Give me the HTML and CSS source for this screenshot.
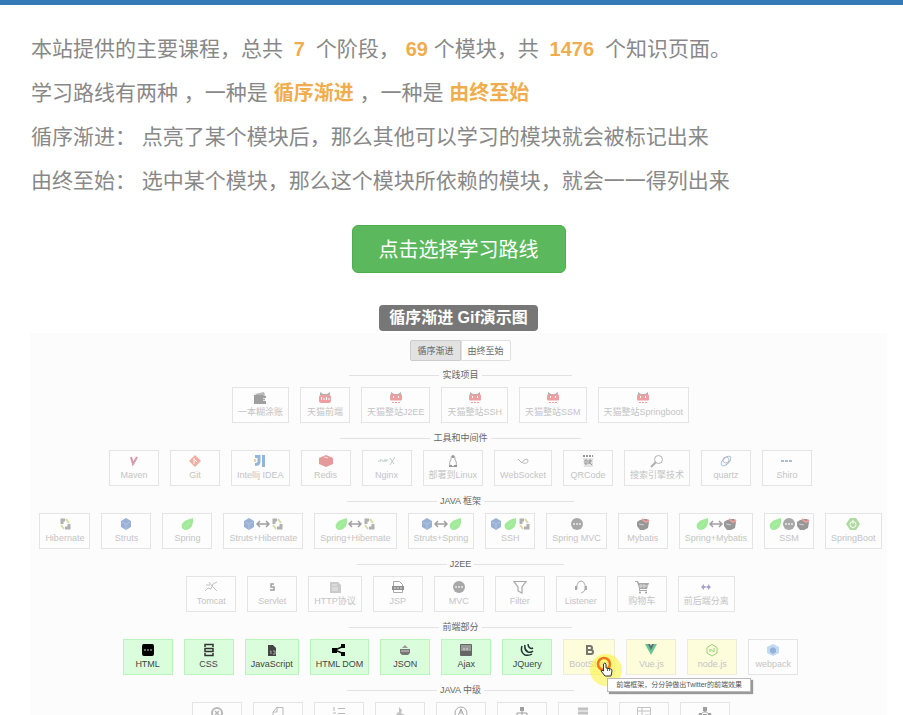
FILE: index.html
```html
<!DOCTYPE html>
<html lang="zh-CN">
<head>
<meta charset="utf-8">
<title>学习路线</title>
<link rel="stylesheet" href="styles.css">
</head>
<body>
<svg class="sprite" aria-hidden="true">
  <symbol id="wallet" viewBox="0 0 14 14"><path fill="#444" d="M1 4h9l3 1v2h-3v3h3v3H1z"/><path fill="#777" d="M2 3l9-2 1 3H3z"/><circle cx="11" cy="8.500" r="1" fill="#444"/></symbol>
  <symbol id="cat" viewBox="0 0 14 14"><path fill="#666" d="M2 4V1l3 2h4l3-2v3z"/><rect x="1" y="4" width="12" height="8" rx="2" fill="#e0444a"/><path stroke="#fff" d="M3.500 6v3M6 7v2M8.500 6v3M11 7v2"/></symbol>
  <symbol id="cat2" viewBox="0 0 14 14"><path fill="#666" d="M2 4V1l3 2h4l3-2v3z"/><rect x="1" y="3.500" width="12" height="6" rx="1" fill="#e0444a"/><path stroke="#fff" d="M4.500 5v2M9.500 5v2"/><path stroke="#e0444a" stroke-dasharray="2 1" d="M3 11.500h8"/></symbol>
  <symbol id="maven" viewBox="0 0 14 14"><path fill="none" stroke="#c0304c" stroke-width="2" d="M4 3l2 7 4-7"/><path stroke="#8a5a9a" d="M6 11l3-5"/></symbol>
  <symbol id="git" viewBox="0 0 14 14"><path fill="#e8604a" d="M7 1l6 6-6 6-6-6z"/><path stroke="#fff" fill="none" d="M6 4v6M6 5l3 3"/></symbol>
  <symbol id="idea" viewBox="0 0 14 14"><path fill="none" stroke="#2a72b8" stroke-width="3" d="M2 2.500h4v5q0 3-4 3M10.500 1v12"/><path stroke="#f0a040" stroke-width="2" d="M2 5v3"/></symbol>
  <symbol id="redis" viewBox="0 0 14 14"><path fill="#cc3a3a" d="M7 1l7 3v6l-7 3-7-3V4z"/><path fill="none" stroke="#f6c6c6" d="M5 3l4 1"/></symbol>
  <symbol id="nginx" viewBox="0 0 20 14"><path fill="none" stroke="#7a9a92" d="M1 7h3V5M5 7h3V5M9 8V6h2M13 11l5-8M13 4l4 6"/></symbol>
  <symbol id="linux" viewBox="0 0 14 14"><path fill="#fff" stroke="#444" d="M7 1.500c3 0 1 4 3 6 1 3 0 5-3 5s-4-2-3-5c2-2 0-6 3-6z"/><path stroke="#333" stroke-width="2" d="M3 12h3M8 12h3M6 3h2"/></symbol>
  <symbol id="socket" viewBox="0 0 14 14"><path fill="none" stroke="#777" d="M2 5l4 4 2-3M8 6q4-2 4 1t-5 2"/></symbol>
  <symbol id="qr" viewBox="0 0 14 14"><path stroke="#333" stroke-width="2" stroke-dasharray="2 1" d="M2 2h10"/><path fill="#ccc" d="M2 4h10v9H3z"/><path fill="none" stroke="#333" d="M4 6h2v4H4zM8 10V6h2v2H8l3 3"/></symbol>
  <symbol id="search" viewBox="0 0 14 14"><circle cx="8.500" cy="5.500" r="4" fill="none" stroke="#666"/><path stroke="#666" stroke-width="2" d="M6 8l-5 5"/></symbol>
  <symbol id="quartz" viewBox="0 0 14 14"><ellipse cx="7" cy="7" rx="6" ry="3" fill="none" stroke="#3a76a8" transform="rotate(-45 7 7)"/><circle cx="7" cy="6" r="3" fill="none" stroke="#888"/></symbol>
  <symbol id="shiro" viewBox="0 0 14 14"><path stroke="#5a80a0" stroke-width="2" stroke-dasharray="3 1" d="M1 7h12"/></symbol>
  <symbol id="hib" viewBox="0 0 14 14"><path fill="none" stroke="#666" stroke-width="3" d="M7 3H4v4M7 11h4V7"/><path stroke="#b8b848" stroke-width="2" d="M8 2l3 4M3 8l3 4"/></symbol>
  <symbol id="struts" viewBox="0 0 14 14"><path fill="#3a68b0" d="M7 1l5 3v6l-5 3-5-3V4z"/><path fill="none" stroke="#6a8cc4" d="M3 5l4 2 4-2M7 7v5"/></symbol>
  <symbol id="leaf" viewBox="0 0 14 14"><path fill="#48d838" d="M13 1q1 8-4 11-4 2-6 0-2-2-1-5 2-4 11-6z"/><path stroke="#70e060" d="M4 11l6-6"/></symbol>
  <symbol id="link" viewBox="0 0 14 14"><path fill="none" stroke="#444" stroke-width="1.500" d="M1 7h12M4 4L1 7l3 3M10 4l3 3-3 3"/></symbol>
  <symbol id="disc" viewBox="0 0 14 14"><circle cx="7" cy="7" r="6" fill="#555"/><path stroke="#bbb" stroke-width="2" stroke-dasharray="2 1" d="M3 7h8"/></symbol>
  <symbol id="bird" viewBox="0 0 14 14"><path fill="#333" d="M1 5l3-2 7-1 2 3-1 6-4 2H4L1 9z"/><path stroke="#e04040" stroke-width="2" d="M6 2l4 3 3-2"/><path stroke="#aaa" d="M3 7l5 1"/></symbol>
  <symbol id="boot" viewBox="0 0 14 14"><path fill="#64b848" d="M4 1h6l4 6-4 6H4L0 7z"/><circle cx="7" cy="7.500" r="3" fill="none" stroke="#fff"/><path stroke="#fff" d="M7 3v4"/></symbol>
  <symbol id="tomcat" viewBox="0 0 14 14"><path fill="none" stroke="#888" d="M1 11l3-3 3 1 2-5 4-2M5 2l3 4 5 5M2 5h4"/></symbol>
  <symbol id="servlet" viewBox="0 0 14 14"><path fill="none" stroke="#444" stroke-width="1.500" d="M9 4H6v3h3v3H5"/></symbol>
  <symbol id="http" viewBox="0 0 14 14"><path fill="#999" d="M2 2h8l3 3v8H2z"/><path stroke="#ddd" d="M4 5h5M4 8h6M4 10h6"/></symbol>
  <symbol id="jsp" viewBox="0 0 14 14"><path fill="#fff" stroke="#555" d="M2.500 1.500h6l3 3v8h-9z"/><path fill="#222" d="M1 6h12v4H1z"/><path stroke="#ccc" stroke-dasharray="2 1" d="M3 8h8"/></symbol>
  <symbol id="funnel" viewBox="0 0 14 14"><path fill="none" stroke="#555" stroke-width="1.200" d="M1 1.500h12L9 7v6l-4-2V7z"/></symbol>
  <symbol id="headset" viewBox="0 0 14 14"><path fill="none" stroke="#666" d="M3 9V5q1-4 4-4t4 4v4q0 3-4 4"/><path stroke="#555" stroke-width="2" d="M2 6v4M12 6v4"/></symbol>
  <symbol id="cart" viewBox="0 0 14 14"><path fill="#555" d="M0 1h3l1 2h10l-2 6H5v1h7v1H4V8L2 2H0z"/><circle cx="5" cy="12.500" r="1" fill="#444"/><circle cx="11" cy="12.500" r="1" fill="#444"/><path stroke="#bbb" d="M6 4v4M9 4v4M4 6h9"/></symbol>
  <symbol id="split" viewBox="0 0 14 14"><path fill="#5050a0" d="M2 7l3-3v2h4V4l3 3-3 3V8H5v2z"/><path stroke="#fff" d="M7 4v6"/></symbol>
  <symbol id="html" viewBox="0 0 14 14"><rect x="1" y="1" width="12" height="12" rx="2"/><path stroke="#ccc" stroke-dasharray="2 1" d="M3 7h8"/></symbol>
  <symbol id="css" viewBox="0 0 14 14"><path fill="none" stroke="#333" stroke-width="1.500" d="M3 4V1.500h8V4M3 10v2.500h8V10M3 5.500h8v3H3z"/></symbol>
  <symbol id="js" viewBox="0 0 14 14"><path fill="#444" d="M3 2h5l3 3v8H3z"/><path stroke="#aaa" fill="none" d="M5 8h1v3M8 8h2v3H8"/></symbol>
  <symbol id="dom" viewBox="0 0 14 14"><path fill="none" stroke="#111" stroke-width="1.500" d="M12 3L3 7l9 4"/><path d="M0 5h5v5H0zM9 1h4v4H9zM9 9h4v4H9z"/></symbol>
  <symbol id="json" viewBox="0 0 14 14"><path fill="#777" d="M2 6h10v4l-2 2H4l-2-2z"/><path fill="#999" d="M4 5l3-3 3 3z"/><path stroke="#ccc" d="M3 8h8"/></symbol>
  <symbol id="ajax" viewBox="0 0 14 14"><rect x="1" y="1" width="12" height="12" rx="1" fill="#666"/><path fill="#999" d="M2 2h10v6H2z"/><path stroke="#ddd" stroke-dasharray="2 1" d="M4 6h6"/></symbol>
  <symbol id="jquery" viewBox="0 0 14 14"><path fill="none" stroke="#233" stroke-width="1.500" d="M2 3q-2 6 3 9 4 1 7-1M5 2q-1 5 3 7 3 1 5-1M8 1q0 3 2 4 1 1 3 0"/></symbol>
  <symbol id="bold" viewBox="0 0 14 14"><path fill="none" stroke="#555" stroke-width="2" d="M5 3h3q2 0 2 2t-2 2H5h4q2 0 2 2t-2 2H5zM5 2v10"/></symbol>
  <symbol id="vue" viewBox="0 0 14 14"><path fill="#42b883" d="M1 1h12L7 12z"/><path fill="#35495e" d="M4 1h6L7 7z"/><path fill="#d5efc8" d="M6 1h2L7 3z"/></symbol>
  <symbol id="node" viewBox="0 0 14 14"><path fill="none" stroke="#80c860" d="M7 1.500l5 3v5.500l-5 3-5-3V4.500zM5 9V6l4 3V5"/></symbol>
  <symbol id="webpack" viewBox="0 0 14 14"><path fill="#88b8e8" d="M7 1l6 3v6l-6 3-6-3V4z"/><path fill="#3068b8" d="M7 4l3 2v3l-3 2-3-2V6z"/></symbol>
  <symbol id="cross" viewBox="0 0 14 14"><circle cx="7" cy="7" r="5" fill="none" stroke="#777" stroke-width="2"/><path stroke="#777" stroke-width="1.500" d="M5 5l4 4M9 5l-4 4"/></symbol>
  <symbol id="page" viewBox="0 0 14 14"><path fill="none" stroke="#777" d="M6 1.500h6v11H2V6zM6 1v5H2"/></symbol>
  <symbol id="list" viewBox="0 0 14 14"><path stroke="#777" d="M6 2.500h7M6 7.500h7M6 12.500h7M2 1v4M1 7h3M1 12h3"/></symbol>
  <symbol id="pin" viewBox="0 0 14 14"><path fill="#888" d="M6 1l3 3-1 3 4 2-2 3-3-2-5 3 2-6 2-1z"/></symbol>
  <symbol id="compass" viewBox="0 0 14 14"><circle cx="7" cy="7" r="6" fill="none" stroke="#555"/><path fill="none" stroke="#555" d="M4 10l3-7 3 7M7 3v5"/></symbol>
  <symbol id="tree" viewBox="0 0 14 14"><path fill="none" stroke="#444" d="M7 3v8M2 10V7h10v3"/><path fill="#444" d="M5 1h4v4H5zM0 9h4v4H0zM5 9h4v4H5zM10 9h4v4h-4z"/></symbol>
  <symbol id="db" viewBox="0 0 14 14"><path stroke="#888" stroke-width="3" d="M2 3h10M2 7h10M2 11h10"/></symbol>
  <symbol id="layout" viewBox="0 0 14 14"><path fill="none" stroke="#888" d="M.5 1.500h13v11H.5zM5 1v12M1 5h12M8 9h5"/></symbol>
  <symbol id="team" viewBox="0 0 14 14"><path fill="none" stroke="#555" d="M7 3v4M3 8l4-3 4 3"/><path fill="#444" d="M5 1h4v4H5zM1 7h3v5H0zM10 7h3l1 5h-4zM5 8h4v5H5z"/></symbol>
</svg>

<main class="page">
  <section class="intro">
    <p>本站提供的主要课程，总共 <b class="num">7</b> 个阶段， <b>69</b> 个模块，共 <b class="num">1476</b> 个知识页面。</p>
    <p>学习路线有两种 ，一种是 <b>循序渐进</b> ，一种是 <b>由终至始</b></p>
    <p>循序渐进： 点亮了某个模块后，那么其他可以学习的模块就会被标记出来</p>
    <p>由终至始： 选中某个模块，那么这个模块所依赖的模块，就会一一得列出来</p>
  </section>

  <button class="choose" type="button">点击选择学习路线</button>
  <span class="caption">循序渐进 Gif演示图</span>

  <section class="demo">
    <div class="modes"><button type="button" class="on">循序渐进</button><button type="button">由终至始</button></div>

    <h2>实践项目</h2>
    <div class="row">
      <button class="tile"><svg><use href="#wallet"/></svg><span>一本糊涂账</span></button>
      <button class="tile"><svg><use href="#cat"/></svg><span>天猫前端</span></button>
      <button class="tile"><svg><use href="#cat2"/></svg><span>天猫整站J2EE</span></button>
      <button class="tile"><svg><use href="#cat2"/></svg><span>天猫整站SSH</span></button>
      <button class="tile"><svg><use href="#cat2"/></svg><span>天猫整站SSM</span></button>
      <button class="tile"><svg><use href="#cat2"/></svg><span>天猫整站Springboot</span></button>
    </div>

    <h2>工具和中间件</h2>
    <div class="row">
      <button class="tile"><svg><use href="#maven"/></svg><span>Maven</span></button>
      <button class="tile"><svg><use href="#git"/></svg><span>Git</span></button>
      <button class="tile"><svg><use href="#idea"/></svg><span>Intellij IDEA</span></button>
      <button class="tile"><svg><use href="#redis"/></svg><span>Redis</span></button>
      <button class="tile"><svg class="wide"><use href="#nginx"/></svg><span>Nginx</span></button>
      <button class="tile"><svg><use href="#linux"/></svg><span>部署到Linux</span></button>
      <button class="tile"><svg><use href="#socket"/></svg><span>WebSocket</span></button>
      <button class="tile"><svg><use href="#qr"/></svg><span>QRCode</span></button>
      <button class="tile"><svg><use href="#search"/></svg><span>搜索引擎技术</span></button>
      <button class="tile"><svg><use href="#quartz"/></svg><span>quartz</span></button>
      <button class="tile"><svg><use href="#shiro"/></svg><span>Shiro</span></button>
    </div>

    <h2>JAVA 框架</h2>
    <div class="row">
      <button class="tile"><svg><use href="#hib"/></svg><span>Hibernate</span></button>
      <button class="tile"><svg><use href="#struts"/></svg><span>Struts</span></button>
      <button class="tile"><svg><use href="#leaf"/></svg><span>Spring</span></button>
      <button class="tile"><i><svg><use href="#struts"/></svg><svg><use href="#link"/></svg><svg><use href="#hib"/></svg></i><span>Struts+Hibernate</span></button>
      <button class="tile"><i><svg><use href="#leaf"/></svg><svg><use href="#link"/></svg><svg><use href="#hib"/></svg></i><span>Spring+Hibernate</span></button>
      <button class="tile"><i><svg><use href="#struts"/></svg><svg><use href="#link"/></svg><svg><use href="#leaf"/></svg></i><span>Struts+Spring</span></button>
      <button class="tile"><i><svg><use href="#struts"/></svg><svg><use href="#leaf"/></svg><svg><use href="#hib"/></svg></i><span>SSH</span></button>
      <button class="tile"><svg><use href="#disc"/></svg><span>Spring MVC</span></button>
      <button class="tile"><svg><use href="#bird"/></svg><span>Mybatis</span></button>
      <button class="tile"><i><svg><use href="#leaf"/></svg><svg><use href="#link"/></svg><svg><use href="#bird"/></svg></i><span>Spring+Mybatis</span></button>
      <button class="tile"><i><svg><use href="#leaf"/></svg><svg><use href="#disc"/></svg><svg><use href="#bird"/></svg></i><span>SSM</span></button>
      <button class="tile"><svg><use href="#boot"/></svg><span>SpringBoot</span></button>
    </div>

    <h2>J2EE</h2>
    <div class="row">
      <button class="tile"><svg><use href="#tomcat"/></svg><span>Tomcat</span></button>
      <button class="tile"><svg><use href="#servlet"/></svg><span>Servlet</span></button>
      <button class="tile"><svg><use href="#http"/></svg><span>HTTP协议</span></button>
      <button class="tile"><svg><use href="#jsp"/></svg><span>JSP</span></button>
      <button class="tile"><svg><use href="#disc"/></svg><span>MVC</span></button>
      <button class="tile"><svg><use href="#funnel"/></svg><span>Filter</span></button>
      <button class="tile"><svg><use href="#headset"/></svg><span>Listener</span></button>
      <button class="tile"><svg><use href="#cart"/></svg><span>购物车</span></button>
      <button class="tile"><svg><use href="#split"/></svg><span>前后端分离</span></button>
    </div>

    <h2>前端部分</h2>
    <div class="row">
      <button class="tile done"><svg><use href="#html"/></svg><span>HTML</span></button>
      <button class="tile done"><svg><use href="#css"/></svg><span>CSS</span></button>
      <button class="tile done"><svg><use href="#js"/></svg><span>JavaScript</span></button>
      <button class="tile done"><svg><use href="#dom"/></svg><span>HTML DOM</span></button>
      <button class="tile done"><svg><use href="#json"/></svg><span>JSON</span></button>
      <button class="tile done"><svg><use href="#ajax"/></svg><span>Ajax</span></button>
      <button class="tile done"><svg><use href="#jquery"/></svg><span>JQuery</span></button>
      <div class="hover">
        <button class="tile next"><svg><use href="#bold"/></svg><span>BootStrap</span></button>
        <svg class="pointer" viewBox="0 0 32 32" aria-hidden="true">
          <circle cx="16" cy="16" r="16" fill="#fbf432" fill-opacity=".55"/>
          <circle cx="14" cy="10" r="6" fill="none" stroke="#f07818" stroke-width="2.500"/>
          <path fill="#fff" stroke="#333" d="M13.500 10q1.500-2 2.500 0v4l5 1q1 0 1 2l-1 5h-6l-4-5q0-2 2.500 0z"/>
          <path stroke="#666" d="M17.500 15v2M19.500 15v2"/>
        </svg>
        <span class="tip" role="tooltip">前端框架，分分钟做出Twitter的前端效果</span>
      </div>
      <button class="tile next"><svg><use href="#vue"/></svg><span>Vue.js</span></button>
      <button class="tile next"><svg><use href="#node"/></svg><span>node.js</span></button>
      <button class="tile"><svg><use href="#webpack"/></svg><span>webpack</span></button>
    </div>

    <h2>JAVA 中级</h2>
    <div class="row">
      <button class="tile"><svg><use href="#cross"/></svg></button>
      <button class="tile"><svg><use href="#page"/></svg></button>
      <button class="tile"><svg><use href="#list"/></svg></button>
      <button class="tile"><svg><use href="#pin"/></svg></button>
      <button class="tile"><svg><use href="#compass"/></svg></button>
      <button class="tile"><svg><use href="#tree"/></svg></button>
      <button class="tile"><svg><use href="#db"/></svg></button>
      <button class="tile"><svg><use href="#layout"/></svg></button>
      <button class="tile"><svg><use href="#team"/></svg></button>
    </div>
  </section>
</main>
</body>
</html>
```
FILE: styles.css
```css
* { box-sizing: border-box; }

body {
  margin: 0;
  background: #fff;
  font-family: "Liberation Sans", "Noto Sans CJK SC", sans-serif;
}

button { font-family: inherit; }

.sprite { display: none; }

.page {
  display: flex;
  flex-direction: column;
  align-items: center;
  height: 100vh;
  overflow: hidden;
  padding: 22px 16px 0 30px;
  border-top: 5px solid #337ab7;
}

.intro {
  align-self: stretch;
  padding-left: 1px;
  color: #888;
  font-size: 21px;
  line-height: 44px;
}

.intro p { margin: 0; }

.intro b {
  color: #f0ad4e;
  font-size: 20px;
}

.intro .num { margin: 0 5px; }

.choose {
  flex: none;
  height: 48px;
  margin: 22px 0 32px;
  padding: 0 26px 2px;
  border: 1px solid #4cae4c;
  border-radius: 6px;
  background: #5cb85c;
  color: #fff;
  font-size: 20px;
}

.caption {
  flex: none;
  padding: 0 10px;
  border-radius: 4px;
  background: #777;
  color: #fff;
  font-size: 16px;
  font-weight: bold;
  line-height: 26px;
}

.demo {
  display: flex;
  flex: 1;
  flex-direction: column;
  align-items: center;
  align-self: stretch;
  min-height: 0;
  margin-top: 2px;
  padding: 7px 0 0 4px;
  overflow: hidden;
  background: #fcfcfc;
  font-size: 9px;
}

.modes {
  display: flex;
  flex: none;
  margin-bottom: 5px;
}

.modes button {
  height: 21px;
  padding: 0 6px;
  border: 1px solid #e0e0e0;
  border-radius: 0 2px 2px 0;
  background: #fff;
  color: #666;
  font-size: 9px;
}

.modes .on {
  border-color: #ccc;
  border-radius: 2px 0 0 2px;
  background: #e2e2e2;
}

.demo h2 {
  display: flex;
  flex: none;
  align-items: center;
  gap: 3px;
  margin: 0 0 3px;
  color: #666;
  font-size: 9px;
  font-weight: normal;
  line-height: 18px;
}

.demo h2::before,
.demo h2::after {
  content: "";
  width: 90px;
  border-top: 1px solid #e2e2e2;
}

.row {
  display: flex;
  flex: none;
  gap: 11px;
  margin-bottom: 6px;
}

.tile {
  display: flex;
  flex: none;
  flex-direction: column;
  align-items: center;
  min-width: 50px;
  height: 36px;
  padding: 3px 5px;
  border: 1px solid #e4e4e4;
  background: #fdfdfd;
  color: #c4c4c4;
  font-size: 9px;
  line-height: 14px;
  white-space: nowrap;
}

.tile svg {
  display: block;
  flex: none;
  width: 14px;
  height: 14px;
  opacity: .5;
}

.tile .wide { width: 20px; }

.tile i {
  display: flex;
  margin: 0 -3px;
}

.done {
  border-color: #b8f4bc;
  background: #dafddc;
  color: #444;
}

.done svg { opacity: 1; }

.next {
  border-color: #ececd8;
  background: #fdfddc;
}

.next svg { opacity: .8; }

.hover { position: relative; }

.pointer {
  position: absolute;
  top: 15px;
  left: 27px;
  width: 32px;
  height: 32px;
}

.tip {
  position: absolute;
  top: 39px;
  left: 44px;
  padding: 0 8px;
  border: 1px solid #bbb;
  background: #fff;
  box-shadow: 2px 2px 1px #999;
  color: #555;
  font-size: 7px;
  line-height: 12px;
  white-space: nowrap;
}
```
